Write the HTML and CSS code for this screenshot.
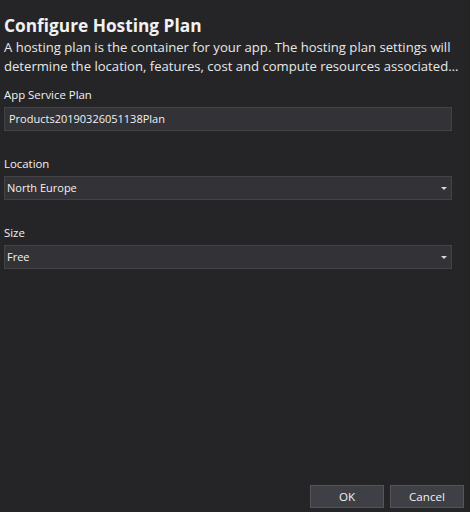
FILE: index.html
```html
<!DOCTYPE html>
<html>
<head>
<meta charset="utf-8">
<link rel="stylesheet" href="styles.css">
</head>
<body>
<div class="dialog">
  <div class="content">
    <h1 class="title">Configure Hosting Plan</h1>
    <p class="desc">A hosting plan is the container for your app. The hosting plan settings will determine the location, features, cost and compute resources associated…</p>
    <div class="field">
      <div class="label">App Service Plan</div>
      <div class="input">Products20190326051138Plan</div>
    </div>
    <div class="field">
      <div class="label">Location</div>
      <div class="input select">North Europe<span class="arrow"></span></div>
    </div>
    <div class="field">
      <div class="label">Size</div>
      <div class="input select">Free<span class="arrow"></span></div>
    </div>
  </div>
  <div class="buttons">
    <div class="btn">OK</div>
    <div class="btn">Cancel</div>
  </div>
</div>
</body>
</html>
```
FILE: styles.css
```css
html, body {
  margin: 0;
  padding: 0;
  background: #252528;
}
body {
  width: 470px;
  height: 512px;
  font-family: "Open Sans", "Noto Sans", sans-serif;
  color: #f1f1f1;
}
.dialog {
  height: 512px;
  display: flex;
  flex-direction: column;
  justify-content: space-between;
  box-sizing: border-box;
  padding: 14px 6px 4px 4px;
}
.content {
  display: flex;
  flex-direction: column;
}
.title {
  margin: 0;
  font-size: 17.3px;
  font-weight: 700;
  line-height: 24px;
  color: #f1f1f1;
}
.desc {
  margin: 0;
  width: 456px;
  font-size: 13.1px;
  line-height: 19px;
  color: #e8e8e8;
}
.field {
  display: flex;
  flex-direction: column;
}
.field:first-of-type {
  margin-top: 10px;
}
.field + .field {
  margin-top: 24px;
}
.label {
  font-size: 11.4px;
  line-height: 18px;
  color: #f1f1f1;
  margin-bottom: 3px;
}
.input {
  position: relative;
  width: 448px;
  height: 24px;
  box-sizing: border-box;
  background: #333337;
  border: 1px solid #434346;
  font-size: 11px;
  line-height: 22px;
  padding-left: 4px;
  color: #f1f1f1;
}
.select {
  padding-left: 2px;
}
.arrow {
  position: absolute;
  right: 4px;
  top: 10px;
  width: 0;
  height: 0;
  border-left: 3px solid transparent;
  border-right: 3px solid transparent;
  border-top: 3px solid #d8d8d8;
}
.buttons {
  display: flex;
  justify-content: flex-end;
  gap: 6px;
}
.btn {
  width: 74px;
  height: 23px;
  box-sizing: border-box;
  background: #3f3f46;
  border: 1px solid #555559;
  font-size: 11.6px;
  line-height: 21px;
  text-align: center;
  color: #f1f1f1;
}
```
